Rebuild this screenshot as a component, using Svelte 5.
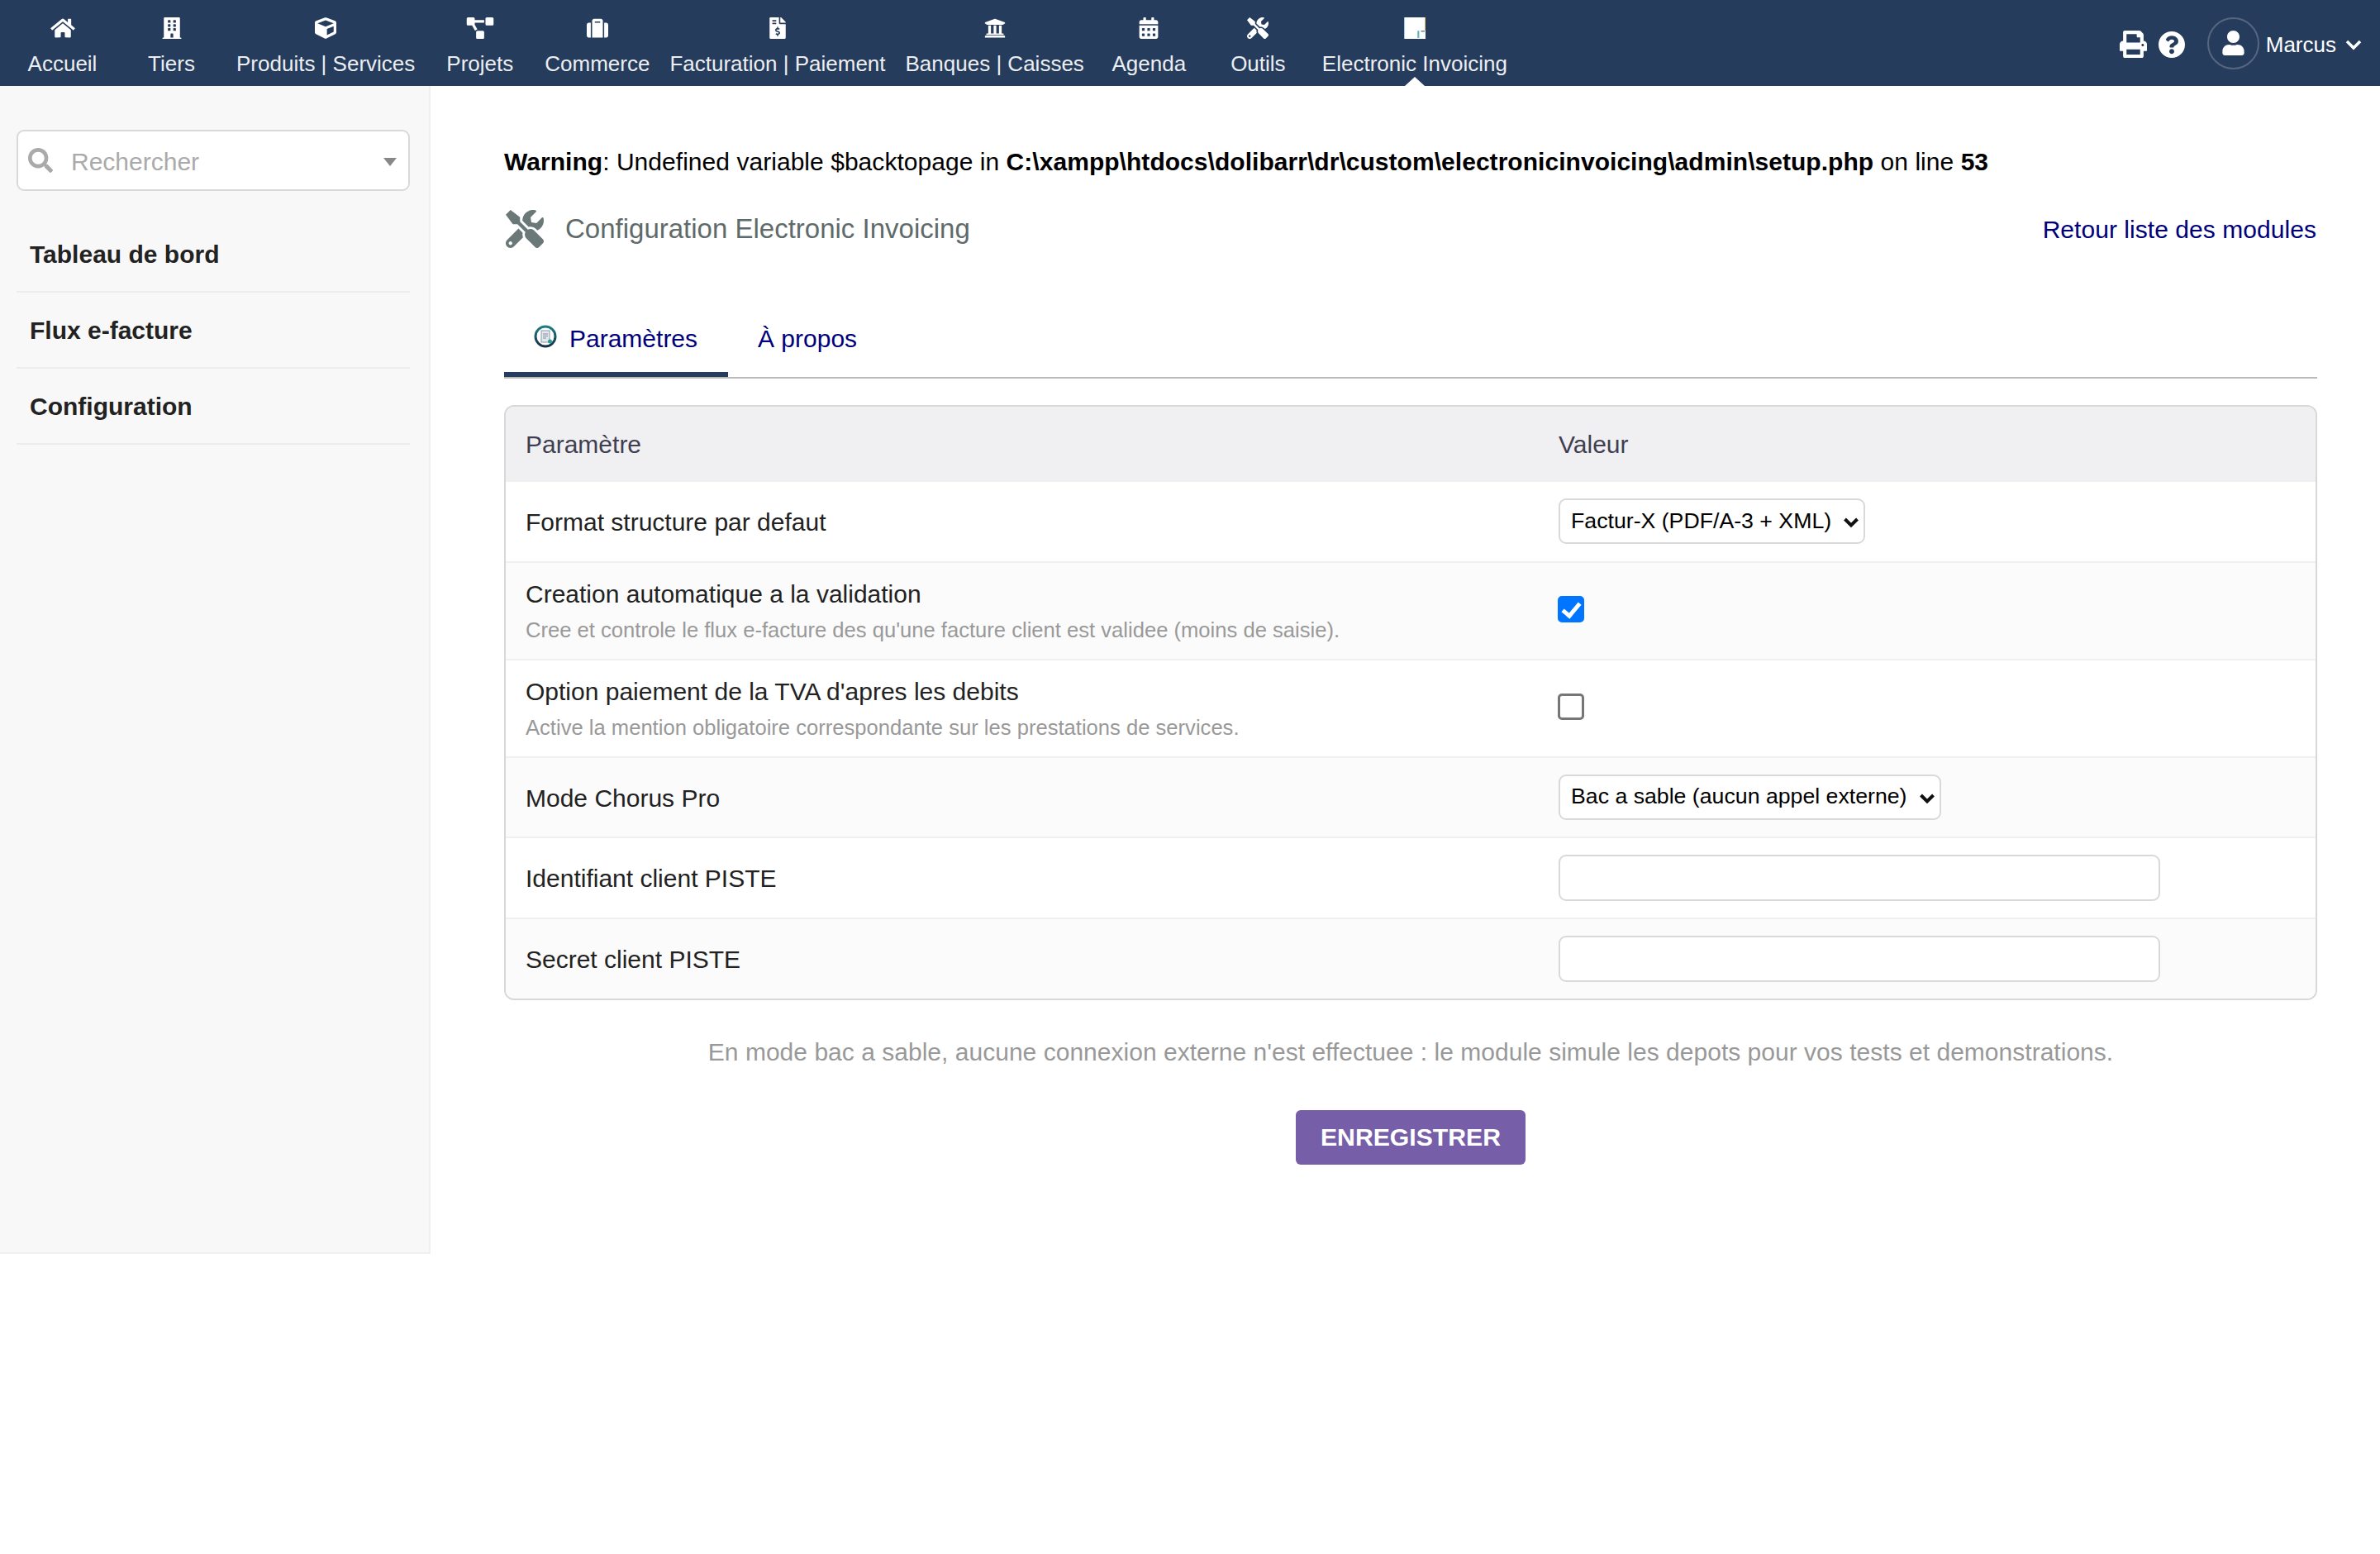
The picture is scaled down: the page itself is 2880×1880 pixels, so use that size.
<script>
  const icons = {
    home: { vb: "0 0 576 512", d: "M280.37 148.26L96 300.11V464a16 16 0 0 0 16 16l112.06-.29a16 16 0 0 0 15.92-16V368a16 16 0 0 1 16-16h64a16 16 0 0 1 16 16v95.64a16 16 0 0 0 16 16.05L464 480a16 16 0 0 0 16-16V300L295.67 148.26a12.19 12.19 0 0 0-15.3 0zM571.6 251.47L488 182.56V44.05a12 12 0 0 0-12-12h-56a12 12 0 0 0-12 12v72.61L318.47 43a48 48 0 0 0-61 0L4.34 251.47a12 12 0 0 0-1.6 16.9l25.5 31A12 12 0 0 0 45.15 301l235.22-193.74a12.19 12.19 0 0 1 15.3 0L530.9 301a12 12 0 0 0 16.9-1.6l25.5-31a12 12 0 0 0-1.7-16.93z" },
    building: { vb: "0 0 448 512", d: "M436 480h-20V24c0-13.255-10.745-24-24-24H56C42.745 0 32 10.745 32 24v456H12c-6.627 0-12 5.373-12 12v20h448v-20c0-6.627-5.373-12-12-12zM128 76c0-6.627 5.373-12 12-12h40c6.627 0 12 5.373 12 12v40c0 6.627-5.373 12-12 12h-40c-6.627 0-12-5.373-12-12V76zm0 96c0-6.627 5.373-12 12-12h40c6.627 0 12 5.373 12 12v40c0 6.627-5.373 12-12 12h-40c-6.627 0-12-5.373-12-12v-40zm52 148h-40c-6.627 0-12-5.373-12-12v-40c0-6.627 5.373-12 12-12h40c6.627 0 12 5.373 12 12v40c0 6.627-5.373 12-12 12zm76 160h-64v-84c0-6.627 5.373-12 12-12h40c6.627 0 12 5.373 12 12v84zm64-172c0 6.627-5.373 12-12 12h-40c-6.627 0-12-5.373-12-12v-40c0-6.627 5.373-12 12-12h40c6.627 0 12 5.373 12 12v40zm0-96c0 6.627-5.373 12-12 12h-40c-6.627 0-12-5.373-12-12v-40c0-6.627 5.373-12 12-12h40c6.627 0 12 5.373 12 12v40zm0-96c0 6.627-5.373 12-12 12h-40c-6.627 0-12-5.373-12-12V76c0-6.627 5.373-12 12-12h40c6.627 0 12 5.373 12 12v40z" },
    cube: { vb: "0 0 512 512", d: "M239.1 6.3l-208 78c-18.7 7-31.1 25-31.1 45v225.1c0 18.2 10.3 34.8 26.5 42.9l208 104c13.5 6.8 29.4 6.8 42.9 0l208-104c16.3-8.1 26.5-24.8 26.5-42.9V129.3c0-20-12.4-37.9-31.1-44.9l-208-78C262 2.2 250 2.2 239.1 6.3zM256 68.4l192 72v1.1l-192 78-192-78v-1.1l192-72zm32 356V275.5l160-65v133.9l-160 80z" },
    diagram: { vb: "0 0 640 512", d: "M384 320H256c-17.67 0-32 14.33-32 32v128c0 17.67 14.33 32 32 32h128c17.67 0 32-14.33 32-32V352c0-17.67-14.33-32-32-32zM192 32c0-17.67-14.33-32-32-32H32C14.33 0 0 14.33 0 32v128c0 17.67 14.33 32 32 32h95.72l73.16 128.04C211.98 300.98 232.4 288 256 288h.28L192 175.51V128h224V64H192V32zM608 0H480c-17.67 0-32 14.33-32 32v128c0 17.67 14.33 32 32 32h128c17.67 0 32-14.33 32-32V32c0-17.67-14.33-32-32-32z" },
    suitcase: { vb: "0 0 512 512", d: "M128 480h256V80c0-26.5-21.5-48-48-48H176c-26.5 0-48 21.5-48 48v400zm64-384h128v32H192V96zm320 80v256c0 26.5-21.5 48-48 48h-48V128h48c26.5 0 48 21.5 48 48zM96 480H48c-26.5 0-48-21.5-48-48V176c0-26.5 21.5-48 48-48h48v352z" },
    invoice: { vb: "0 0 384 512", d: "M377 105L279.1 7c-4.5-4.5-10.6-7-17-7H256v128h128v-6.1c0-6.3-2.5-12.4-7-16.9zm-153 31V0H24C10.7 0 0 10.7 0 24v464c0 13.3 10.7 24 24 24h336c13.3 0 24-10.7 24-24V160H248c-13.2 0-24-10.8-24-24zM64 72c0-4.42 3.58-8 8-8h80c4.42 0 8 3.58 8 8v16c0 4.42-3.58 8-8 8H72c-4.42 0-8-3.58-8-8V72zm0 80v-16c0-4.42 3.58-8 8-8h80c4.42 0 8 3.58 8 8v16c0 4.42-3.58 8-8 8H72c-4.42 0-8-3.58-8-8zm144 263.88V440c0 4.42-3.58 8-8 8h-16c-4.42 0-8-3.58-8-8v-24.29c-11.29-.58-22.27-4.52-31.37-11.35-3.9-2.93-4.1-8.77-.57-12.14l11.75-11.21c2.77-2.64 6.89-2.76 10.13-.73 3.87 2.42 8.26 3.72 12.82 3.72h28.11c6.5 0 11.8-5.92 11.8-13.19 0-5.95-3.61-11.19-8.77-12.73l-45-13.5c-18.59-5.58-31.58-23.42-31.58-43.39 0-24.52 19.05-44.44 42.67-45.07V232c0-4.42 3.58-8 8-8h16c4.42 0 8 3.58 8 8v24.29c11.29.58 22.27 4.51 31.37 11.35 3.9 2.93 4.1 8.77.57 12.14l-11.75 11.21c-2.77 2.64-6.89 2.76-10.13.73-3.87-2.43-8.26-3.72-12.82-3.72h-28.11c-6.5 0-11.8 5.92-11.8 13.19 0 5.95 3.61 11.19 8.77 12.73l45 13.5c18.59 5.58 31.58 23.42 31.58 43.39 0 24.53-19.05 44.44-42.67 45.07z" },
    bank: { vb: "0 0 512 512", d: "M496 128v16a8 8 0 0 1-8 8h-24v12c0 6.627-5.373 12-12 12H60c-6.627 0-12-5.373-12-12v-12H24a8 8 0 0 1-8-8v-16a8 8 0 0 1 4.941-7.392l232-88a7.996 7.996 0 0 1 6.118 0l232 88A8 8 0 0 1 496 128zm-24 304H40c-13.255 0-24 10.745-24 24v16a8 8 0 0 0 8 8h464a8 8 0 0 0 8-8v-16c0-13.255-10.745-24-24-24zM96 192v192H60c-6.627 0-12 5.373-12 12v20h416v-20c0-6.627-5.373-12-12-12h-36V192h-64v192h-64V192h-64v192h-64V192H96z" },
    calendar: { vb: "0 0 448 512", d: "M0 464c0 26.5 21.5 48 48 48h352c26.5 0 48-21.5 48-48V192H0v272zm320-196c0-6.6 5.4-12 12-12h40c6.6 0 12 5.4 12 12v40c0 6.6-5.4 12-12 12h-40c-6.6 0-12-5.4-12-12v-40zm0 128c0-6.6 5.4-12 12-12h40c6.6 0 12 5.4 12 12v40c0 6.6-5.4 12-12 12h-40c-6.6 0-12-5.4-12-12v-40zM192 268c0-6.6 5.4-12 12-12h40c6.6 0 12 5.4 12 12v40c0 6.6-5.4 12-12 12h-40c-6.6 0-12-5.4-12-12v-40zm0 128c0-6.6 5.4-12 12-12h40c6.6 0 12 5.4 12 12v40c0 6.6-5.4 12-12 12h-40c-6.6 0-12-5.4-12-12v-40zM64 268c0-6.6 5.4-12 12-12h40c6.6 0 12 5.4 12 12v40c0 6.6-5.4 12-12 12H76c-6.6 0-12-5.4-12-12v-40zm0 128c0-6.6 5.4-12 12-12h40c6.6 0 12 5.4 12 12v40c0 6.6-5.4 12-12 12H76c-6.6 0-12-5.4-12-12v-40zM400 64h-48V16c0-8.8-7.2-16-16-16h-32c-8.8 0-16 7.2-16 16v48H160V16c0-8.8-7.2-16-16-16h-32c-8.8 0-16 7.2-16 16v48H48C21.5 64 0 85.5 0 112v48h448v-48c0-26.5-21.5-48-48-48z" },
    tools: { vb: "0 0 512 512", d: "M501.1 395.7L384 278.6c-23.1-23.1-57.6-27.6-85.4-13.9L192 158.1V96L64 0 0 64l96 128h62.1l106.6 106.6c-13.6 27.8-9.2 62.3 13.9 85.4l117.1 117.1c14.6 14.6 38.2 14.6 52.7 0l52.7-52.7c14.5-14.6 14.5-38.2 0-52.7zM331.7 225c28.3 0 54.9 11 74.9 31l19.4 19.4c15.8-6.9 30.8-16.5 43.8-29.5 37.1-37.1 49.7-89.3 37.9-136.7-2.2-9-13.5-12.1-20.1-5.5l-74.4 74.4-67.9-11.3L334 98.9l74.4-74.4c6.6-6.6 3.4-17.9-5.7-20.2-47.4-11.7-99.6.9-136.6 37.9-28.5 28.5-41.9 66.1-41.2 103.6l82.1 82.1c8.1-1.9 16.5-2.9 24.7-2.9zm-103.9 82l-56.7-56.7L18.7 402.8c-25 25-25 65.5 0 90.5s65.5 25 90.5 0l123.6-123.6c-7.6-19.9-9.9-41.6-5-62.7zM64 472c-13.2 0-24-10.8-24-24 0-13.3 10.7-24 24-24s24 10.7 24 24c0 13.2-10.7 24-24 24z" },
    print: { vb: "0 0 512 512", d: "M448 192V77.25c0-8.49-3.37-16.62-9.37-22.63L393.37 9.37c-6-6-14.14-9.37-22.63-9.37H96C78.33 0 64 14.33 64 32v160c-35.35 0-64 28.65-64 64v112c0 8.84 7.16 16 16 16h48v96c0 17.67 14.33 32 32 32h320c17.67 0 32-14.33 32-32v-96h48c8.84 0 16-7.16 16-16V256c0-35.35-28.65-64-64-64zm-64 256H128v-96h256v96zm0-224H128V64h192v48c0 8.84 7.16 16 16 16h48v96zm48 72c-13.25 0-24-10.75-24-24 0-13.26 10.75-24 24-24s24 10.74 24 24c0 13.25-10.75 24-24 24z" },
    help: { vb: "8 8 496 496", d: "M504 256c0 136.997-111.043 248-248 248S8 392.997 8 256C8 119.083 119.043 8 256 8s248 111.083 248 248zM262.655 90c-54.497 0-89.255 22.957-116.549 63.758-3.536 5.286-2.353 12.415 2.715 16.258l34.699 26.31c5.205 3.947 12.621 3.008 16.665-2.122 17.864-22.658 30.113-35.797 57.303-35.797 20.429 0 45.698 13.148 45.698 32.958 0 14.976-12.363 22.667-32.534 33.976C247.128 238.528 216 254.941 216 296v4c0 6.627 5.373 12 12 12h56c6.627 0 12-5.373 12-12v-1.333c0-28.462 83.186-29.647 83.186-106.667 0-58.002-60.165-102-116.531-102zM256 338c-25.365 0-46 20.635-46 46 0 25.364 20.635 46 46 46s46-20.636 46-46c0-25.365-20.635-46-46-46z" },
    user: { vb: "0 0 448 512", d: "M224 256c70.7 0 128-57.3 128-128S294.7 0 224 0 96 57.3 96 128s57.3 128 128 128zm89.6 32h-16.7c-22.2 10.2-46.9 16-72.9 16s-50.6-5.8-72.9-16h-16.7C60.2 288 0 348.2 0 422.4V464c0 26.5 21.5 48 48 48h352c26.5 0 48-21.5 48-48v-41.6c0-74.2-60.2-134.4-134.4-134.4z" },
    search: { vb: "0 0 512 512", d: "M505 442.7L405.3 343c-4.5-4.5-10.6-7-17-7H372c27.6-35.3 44-79.7 44-128C416 93.1 322.9 0 208 0S0 93.1 0 208s93.1 208 208 208c48.3 0 92.7-16.4 128-44v16.3c0 6.4 2.5 12.5 7 17l99.7 99.7c9.4 9.4 24.6 9.4 33.9 0l28.3-28.3c9.4-9.4 9.4-24.6.1-34zM208 336c-70.7 0-128-57.2-128-128 0-70.7 57.2-128 128-128 70.7 0 128 57.2 128 128 0 70.7-57.2 128-128 128z" }
  };

  const menu = [
    { label: "Accueil", icon: "home" },
    { label: "Tiers", icon: "building" },
    { label: "Produits | Services", icon: "cube" },
    { label: "Projets", icon: "diagram" },
    { label: "Commerce", icon: "suitcase" },
    { label: "Facturation | Paiement", icon: "invoice" },
    { label: "Banques | Caisses", icon: "bank" },
    { label: "Agenda", icon: "calendar" },
    { label: "Outils", icon: "tools" }
  ];

  const sideItems = ["Tableau de bord", "Flux e-facture", "Configuration"];
</script>

<div class="page">
  <header class="topbar">
    <nav class="menu">
      {#each menu as item}
        <a class="menu-item" href="#top">
          <svg class="menu-icon" viewBox={icons[item.icon].vb}><path d={icons[item.icon].d} /></svg>
          <span>{item.label}</span>
        </a>
      {/each}
      <a class="menu-item active" href="#top">
        <svg class="menu-icon" viewBox="0 0 24 24">
          <rect x="0" y="0" width="24" height="24" fill="#fff" />
          <rect x="0" y="0" width="1" height="24" fill="#9fd0f0" />
          <rect x="23" y="0" width="1" height="15" fill="#e8c070" />
          <rect x="15" y="15" width="2" height="8" fill="#5fb8b8" />
          <rect x="19" y="15" width="4" height="1" fill="#26506a" />
        </svg>
        <span>Electronic Invoicing</span>
      </a>
    </nav>
    <div class="top-right">
      <svg class="tool print" viewBox={icons.print.vb}><path d={icons.print.d} /></svg>
      <svg class="tool help" viewBox={icons.help.vb}><path d={icons.help.d} /></svg>
      <span class="avatar"><svg viewBox={icons.user.vb}><path d={icons.user.d} /></svg></span>
      <span class="username">Marcus</span>
      <svg class="user-chevron" viewBox="0 0 20 14"><path d="M2 3l8 8 8-8" /></svg>
    </div>
  </header>

  <div class="body">
    <aside class="sidebar">
      <div class="search">
        <svg viewBox={icons.search.vb}><path d={icons.search.d} /></svg>
        <span class="placeholder">Rechercher</span>
        <span class="caret"></span>
      </div>
      {#each sideItems as item}
        <a class="side-item" href="#top">{item}</a>
      {/each}
    </aside>

    <main class="content">
      <p class="warning"><b>Warning</b>: Undefined variable $backtopage in <b>C:\xampp\htdocs\dolibarr\dr\custom\electronicinvoicing\admin\setup.php</b> on line <b>53</b></p>

      <div class="title-row">
        <svg class="title-icon" viewBox={icons.tools.vb}><path d={icons.tools.d} /></svg>
        <h1>Configuration Electronic Invoicing</h1>
        <a class="back" href="#top">Retour liste des modules</a>
      </div>

      <div class="tabs">
        <a class="tab current" href="#top">
          <svg class="tab-icon" viewBox="0 0 28 28">
            <defs>
              <linearGradient id="ring" x1="0" y1="0" x2="0" y2="1">
                <stop offset="0" stop-color="#1f7f80" />
                <stop offset="1" stop-color="#17324a" />
              </linearGradient>
            </defs>
            <circle cx="14" cy="14" r="12" fill="#fff" stroke="url(#ring)" stroke-width="3" />
            <rect x="9" y="7" width="10" height="14" fill="#e4e9ee" stroke="#8a97a8" stroke-width="1" />
            <path d="M11 11h6M11 13.500h6M11 16h4" stroke="#7a8898" stroke-width="1" />
            <circle cx="19.500" cy="20" r="2.500" fill="#2a9d94" />
          </svg>
          Paramètres
        </a>
        <a class="tab" href="#top">À propos</a>
      </div>

      <div class="table-wrap">
        <table>
          <thead>
            <tr>
              <th class="col-label">Paramètre</th>
              <th>Valeur</th>
            </tr>
          </thead>
          <tbody>
            <tr class="short">
              <td>Format structure par defaut</td>
              <td>
                <span class="select-wrap">
                  <select class="sel-format">
                    <option>Factur-X (PDF/A-3 + XML)</option>
                  </select>
                  <svg viewBox="0 0 20 14"><path d="M2.500 3l7.500 7.500L17.500 3" /></svg>
                </span>
              </td>
            </tr>
            <tr>
              <td>
                Creation automatique a la validation
                <div class="hint">Cree et controle le flux e-facture des qu'une facture client est validee (moins de saisie).</div>
              </td>
              <td><input type="checkbox" checked /></td>
            </tr>
            <tr>
              <td>
                Option paiement de la TVA d'apres les debits
                <div class="hint">Active la mention obligatoire correspondante sur les prestations de services.</div>
              </td>
              <td><input type="checkbox" /></td>
            </tr>
            <tr class="short">
              <td>Mode Chorus Pro</td>
              <td>
                <span class="select-wrap">
                  <select class="sel-mode">
                    <option>Bac a sable (aucun appel externe)</option>
                  </select>
                  <svg viewBox="0 0 20 14"><path d="M2.500 3l7.500 7.500L17.500 3" /></svg>
                </span>
              </td>
            </tr>
            <tr class="short">
              <td>Identifiant client PISTE</td>
              <td><input class="text" type="text" /></td>
            </tr>
            <tr class="short">
              <td>Secret client PISTE</td>
              <td><input class="text" type="password" /></td>
            </tr>
          </tbody>
        </table>
      </div>

      <p class="note">En mode bac a sable, aucune connexion externe n'est effectuee : le module simule les depots pour vos tests et demonstrations.</p>

      <div class="actions">
        <button type="button" class="save">ENREGISTRER</button>
      </div>
    </main>
  </div>
</div>

<style>
  :global(body) {
    margin: 0;
    background: #fff;
    font-family: "Liberation Sans", Arial, sans-serif;
  }

  .page {
    width: 2880px;
    height: 1880px;
    overflow: hidden;
    font-size: 30px;
    color: #222;
  }

  a {
    text-decoration: none;
  }

  svg path {
    fill: currentColor;
  }

  /* barre du haut */
  .topbar {
    height: 104px;
    background: #263c5c;
    display: flex;
    justify-content: space-between;
    color: #fff;
  }

  .menu {
    display: flex;
    padding-left: 10px;
  }

  .menu-item {
    position: relative;
    box-sizing: border-box;
    min-width: 133px;
    padding: 21px 12px 0;
    display: flex;
    flex-direction: column;
    align-items: center;
    color: #eceef1;
    font-size: 26px;
    line-height: 30px;
    white-space: nowrap;
  }

  .menu-item:first-child {
    min-width: 131px;
  }

  .menu-item:nth-child(9) {
    min-width: 131px;
  }

  .menu-icon {
    height: 26px;
    width: 34px;
    margin-bottom: 15px;
    color: #fff;
  }

  .menu-item.active::after {
    content: "";
    position: absolute;
    bottom: 0;
    left: 50%;
    margin-left: -12px;
    border-left: 12px solid transparent;
    border-right: 12px solid transparent;
    border-bottom: 11px solid #fff;
  }

  .top-right {
    display: flex;
    align-items: center;
    padding-right: 22px;
  }

  .tool {
    width: 33px;
    height: 33px;
    margin-top: 3px;
  }

  .help {
    width: 32px;
    height: 32px;
    margin-left: 14px;
    margin-right: 27px;
  }

  .avatar {
    box-sizing: border-box;
    width: 63px;
    height: 63px;
    border: 2px solid rgba(255, 255, 255, 0.22);
    border-radius: 50%;
    display: flex;
    align-items: center;
    justify-content: center;
  }

  .avatar svg {
    width: 27px;
    height: 30px;
  }

  .username {
    margin-left: 8px;
    margin-top: 5px;
    font-size: 26px;
  }

  .user-chevron {
    width: 20px;
    height: 14px;
    margin-left: 11px;
    margin-top: 4px;
  }

  .user-chevron path {
    fill: none;
    stroke: #fff;
    stroke-width: 3.5;
  }

  .body {
    display: flex;
    align-items: flex-start;
  }

  /* menu de gauche */
  .sidebar {
    box-sizing: border-box;
    width: 521px;
    height: 1413px;
    flex: none;
    padding: 53px 0 0 20px;
    background: #f8f8f8;
    border-right: 2px solid #f0f0f0;
    border-bottom: 2px solid #f0f0f0;
  }

  .search {
    box-sizing: border-box;
    width: 476px;
    height: 74px;
    margin-bottom: 31px;
    padding: 0 14px 0 12px;
    display: flex;
    align-items: center;
    background: #fff;
    border: 2px solid #d9d9d9;
    border-radius: 9px;
  }

  .search svg {
    width: 30px;
    height: 30px;
    color: #aaa;
    flex: none;
  }

  .placeholder {
    margin-left: 22px;
    padding-top: 3px;
    color: #aaa;
    flex: 1;
  }

  .caret {
    border-left: 8px solid transparent;
    border-right: 8px solid transparent;
    border-top: 10px solid #888;
    margin-top: 3px;
  }

  .side-item {
    box-sizing: border-box;
    display: block;
    width: 476px;
    height: 92px;
    padding: 29px 0 0 16px;
    line-height: 34px;
    font-weight: bold;
    color: #222;
    border-bottom: 2px solid #ececec;
  }

  /* contenu */
  .content {
    box-sizing: border-box;
    flex: 1;
    padding: 0 76px 0 89px;
  }

  .warning {
    margin: 75px 0 0;
    line-height: 34px;
    white-space: nowrap;
    letter-spacing: 0.04px;
    color: #000;
  }

  .title-row {
    margin-top: 41px;
    height: 46px;
    display: flex;
    align-items: center;
  }

  .title-icon {
    width: 46px;
    height: 46px;
    margin-left: 2px;
    color: #6a7878;
    flex: none;
  }

  h1 {
    margin: 0 0 0 26px;
    flex: 1;
    font-size: 33px;
    font-weight: normal;
    color: #5f6b6b;
  }

  .back {
    margin-right: 1px;
    margin-top: 2px;
    letter-spacing: 0.05px;
    color: #000078;
  }

  .tabs {
    margin-top: 66px;
    height: 92px;
    box-sizing: border-box;
    display: flex;
    border-bottom: 2px solid #bbb;
  }

  .tab {
    box-sizing: border-box;
    height: 90px;
    padding: 24px 36px 0;
    display: flex;
    align-items: flex-start;
    line-height: 40px;
    color: #000078;
  }

  .tab.current {
    width: 271px;
    border-bottom: 6px solid #263c5c;
  }

  .tab-icon {
    width: 28px;
    height: 28px;
    margin-right: 15px;
    flex: none;
    margin-top: 3px;
  }

  .table-wrap {
    box-sizing: border-box;
    margin-top: 32px;
    border: 2px solid #d8d8d8;
    border-radius: 12px;
    overflow: hidden;
  }

  table {
    width: 100%;
    border-collapse: collapse;
  }

  th {
    box-sizing: border-box;
    height: 90px;
    padding: 2px 24px 0;
    background: #f0f0f3;
    color: #3f3f50;
    font-weight: normal;
    text-align: left;
  }

  .col-label {
    width: 1250px;
  }

  td {
    height: 118px;
    padding: 0 24px;
    border-top: 2px solid #f0f0f0;
    box-sizing: border-box;
    line-height: 38px;
  }

  tr.short td {
    height: 97.5px;
  }

  tr.short td:first-child {
    padding-top: 3px;
  }

  tbody tr:nth-child(even) {
    background: #fbfbfb;
  }

  .hint {
    margin-top: 8px;
    font-size: 25.6px;
    line-height: 32px;
    color: #999;
  }

  .select-wrap {
    position: relative;
    display: inline-block;
    vertical-align: middle;
  }

  .select-wrap svg {
    position: absolute;
    right: 7px;
    top: 22px;
    width: 20px;
    height: 14px;
    pointer-events: none;
  }

  .select-wrap svg path {
    fill: none;
    stroke: #111;
    stroke-width: 4;
  }

  select {
    appearance: none;
    box-sizing: border-box;
    display: block;
    height: 55px;
    padding: 0 0 2px 13px;
    font-family: inherit;
    font-size: 26.7px;
    color: #000;
    background: #fff;
    border: 2px solid #d9d9d9;
    border-radius: 9px;
  }

  .sel-format {
    width: 371px;
  }

  .sel-mode {
    width: 463px;
  }

  input[type="checkbox"] {
    appearance: none;
    position: relative;
    box-sizing: border-box;
    display: block;
    width: 32px;
    height: 32px;
    margin: 0 0 3px -1px;
    background: #fff;
    border: 3px solid #767676;
    border-radius: 5px;
  }

  input[type="checkbox"]:checked {
    background: #0075ff;
    border-color: #0075ff;
  }

  input[type="checkbox"]:checked::after {
    content: "";
    position: absolute;
    left: 7px;
    top: 1px;
    width: 8px;
    height: 17px;
    border-right: 5px solid #fff;
    border-bottom: 5px solid #fff;
    transform: rotate(40deg);
  }

  .text {
    box-sizing: border-box;
    display: block;
    width: 728px;
    height: 56px;
    background: #fff;
    border: 2px solid #d9d9d9;
    border-radius: 9px;
  }

  .note {
    margin: 45px 0 0;
    text-align: center;
    color: #999;
    letter-spacing: 0.02px;
    line-height: 36px;
  }

  .actions {
    margin-top: 52px;
    display: flex;
    justify-content: center;
  }

  .save {
    box-sizing: border-box;
    width: 278px;
    height: 66px;
    padding: 0;
    font-family: inherit;
    font-size: 30.2px;
    font-weight: bold;
    color: #fff;
    background: #765fa8;
    border: none;
    border-radius: 6px;
  }
</style>
